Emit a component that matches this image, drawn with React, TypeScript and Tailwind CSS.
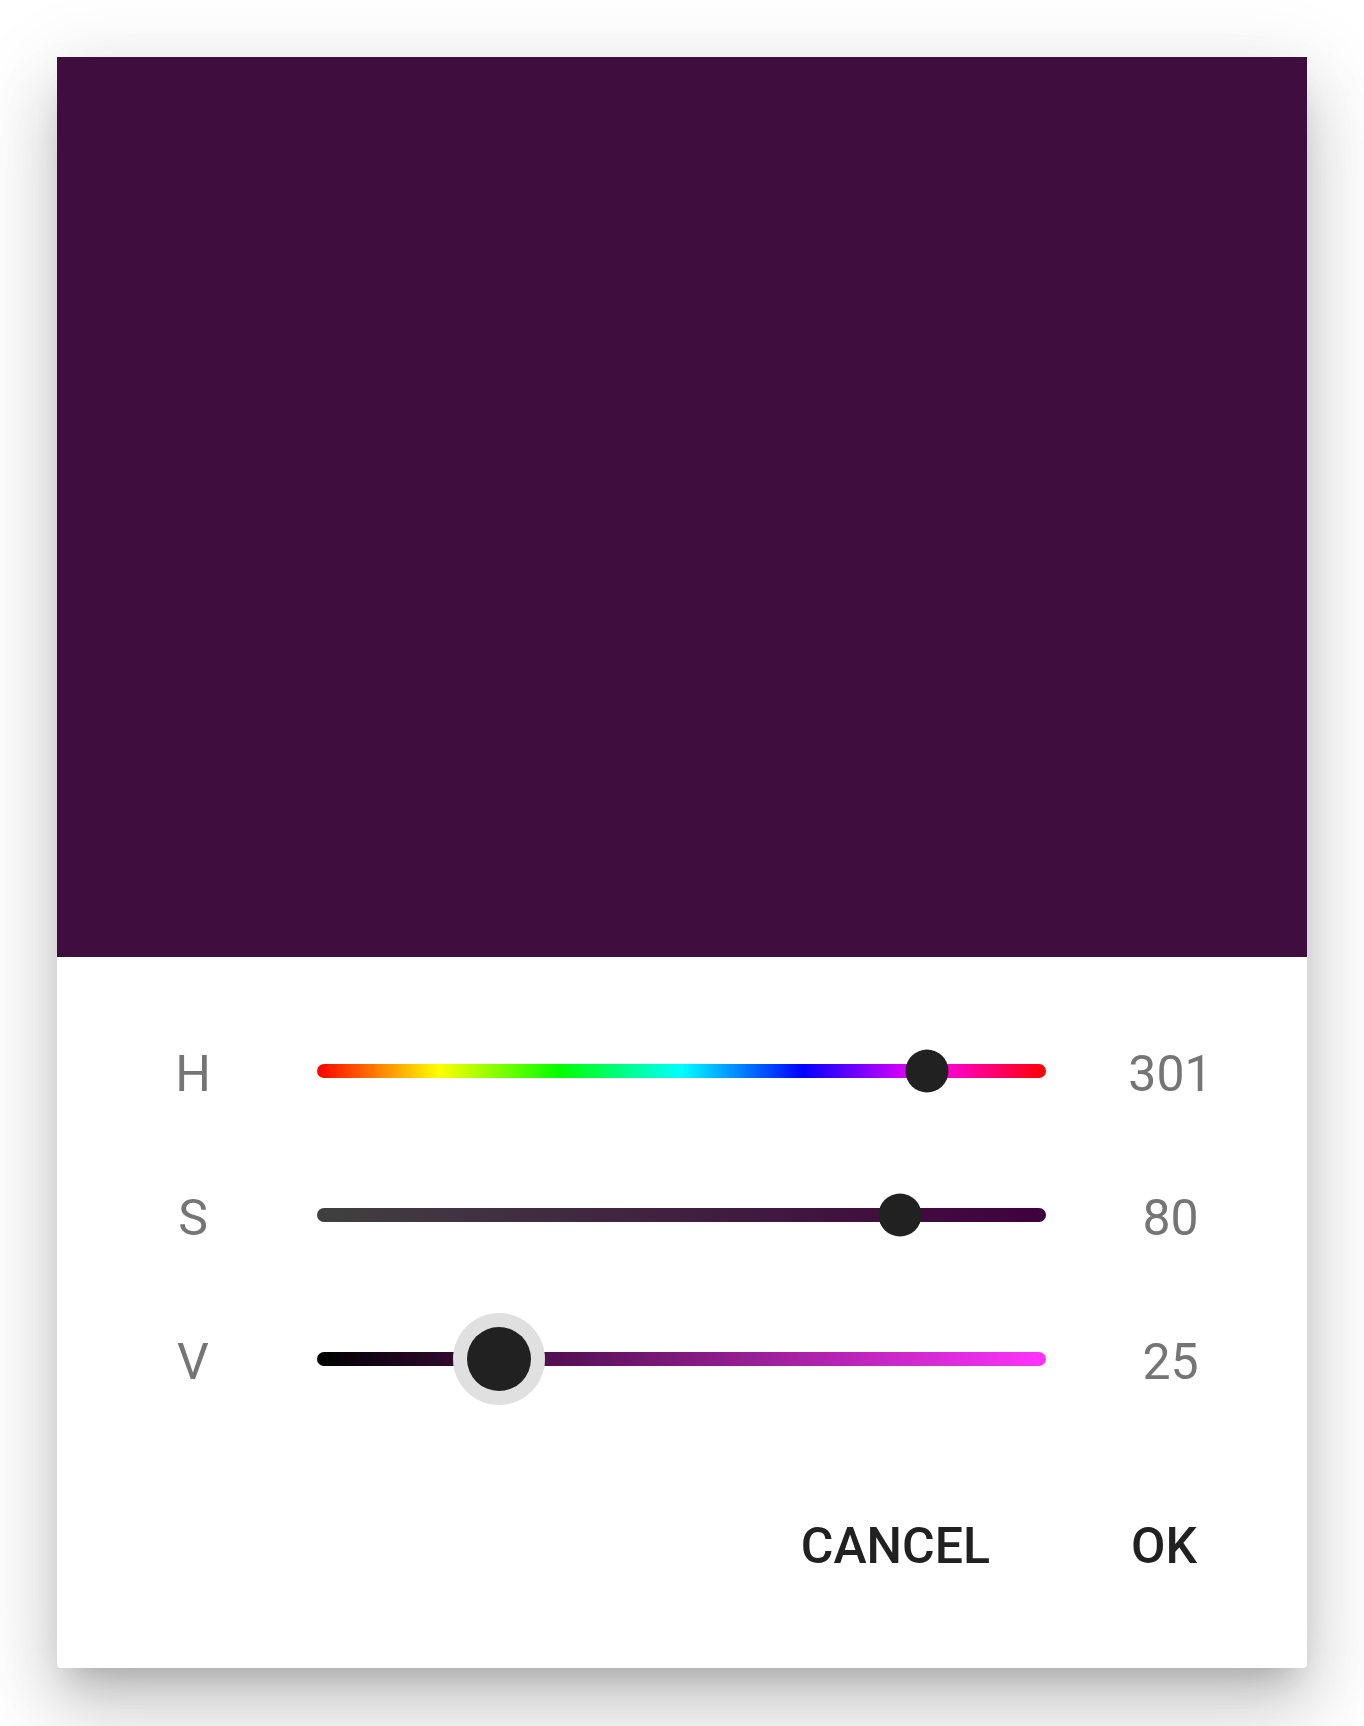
import React from "react";

interface Channel {
  label: string;
  value: number;
  max: number;
  track: string;
  active?: boolean;
}

const channels: Channel[] = [
  {
    label: "H",
    value: 301,
    max: 360,
    track: "bg-[linear-gradient(to_right,#ff0000,#ffff00,#00ff00,#00ffff,#0000ff,#ff00ff,#ff0000)]",
  },
  {
    label: "S",
    value: 80,
    max: 100,
    track: "bg-[linear-gradient(to_right,#404040,#40003f)]",
  },
  {
    label: "V",
    value: 25,
    max: 100,
    track: "bg-[linear-gradient(to_right,#000000,#ff33fc)]",
    active: true,
  },
];

function SliderRow({ ch }: { ch: Channel }) {
  const pct = (ch.value / ch.max) * 100;
  return (
    <div className="grid h-[144px] grid-cols-[96px_1fr_97px] items-center gap-x-[76px]">
      <span className="pt-[6px] text-center text-[50px] leading-none text-[#757575]">{ch.label}</span>
      <div className={`relative h-[14px] rounded-full ${ch.track}`}>
        {ch.active ? (
          <div
            className="absolute top-1/2 flex h-[92px] w-[92px] -translate-x-1/2 -translate-y-1/2 items-center justify-center rounded-full bg-[#e0e0e0]"
            style={{ left: `${pct}%` }}
          >
            <div className="h-[64px] w-[64px] rounded-full bg-[#212121]" />
          </div>
        ) : (
          <div
            className="absolute top-1/2 h-[43px] w-[43px] -translate-x-1/2 -translate-y-1/2 rounded-full bg-[#212121]"
            style={{ left: `${pct}%` }}
          />
        )}
      </div>
      <span className="pt-[6px] text-center text-[50px] leading-none text-[#757575]">{ch.value}</span>
    </div>
  );
}

export default function App() {
  return (
    <div className="min-h-screen bg-white pl-[57px] pt-[57px] font-['Roboto',sans-serif]">
      <div className="w-[1250px] rounded-b-[4px] bg-white shadow-[0_22px_32px_-14px_rgba(0,0,0,0.2),0_48px_76px_4px_rgba(0,0,0,0.12),0_16px_80px_10px_rgba(0,0,0,0.1)]">
        {/* colour preview */}
        <div className="h-[900px] bg-[#400d3f]" />

        <div className="px-[88px] pt-[42px]">
          {channels.map((ch) => (
            <SliderRow key={ch.label} ch={ch} />
          ))}
        </div>

        <div className="mt-[63px] flex justify-end gap-[93px] pb-[74px] pr-[86px]">
          <button className="h-[100px] px-[24px] pt-[4px] text-[50px] font-medium leading-none text-[#212121]">CANCEL</button>
          <button className="h-[100px] px-[24px] pt-[4px] text-[50px] font-medium leading-none text-[#212121]">OK</button>
        </div>
      </div>
    </div>
  );
}
